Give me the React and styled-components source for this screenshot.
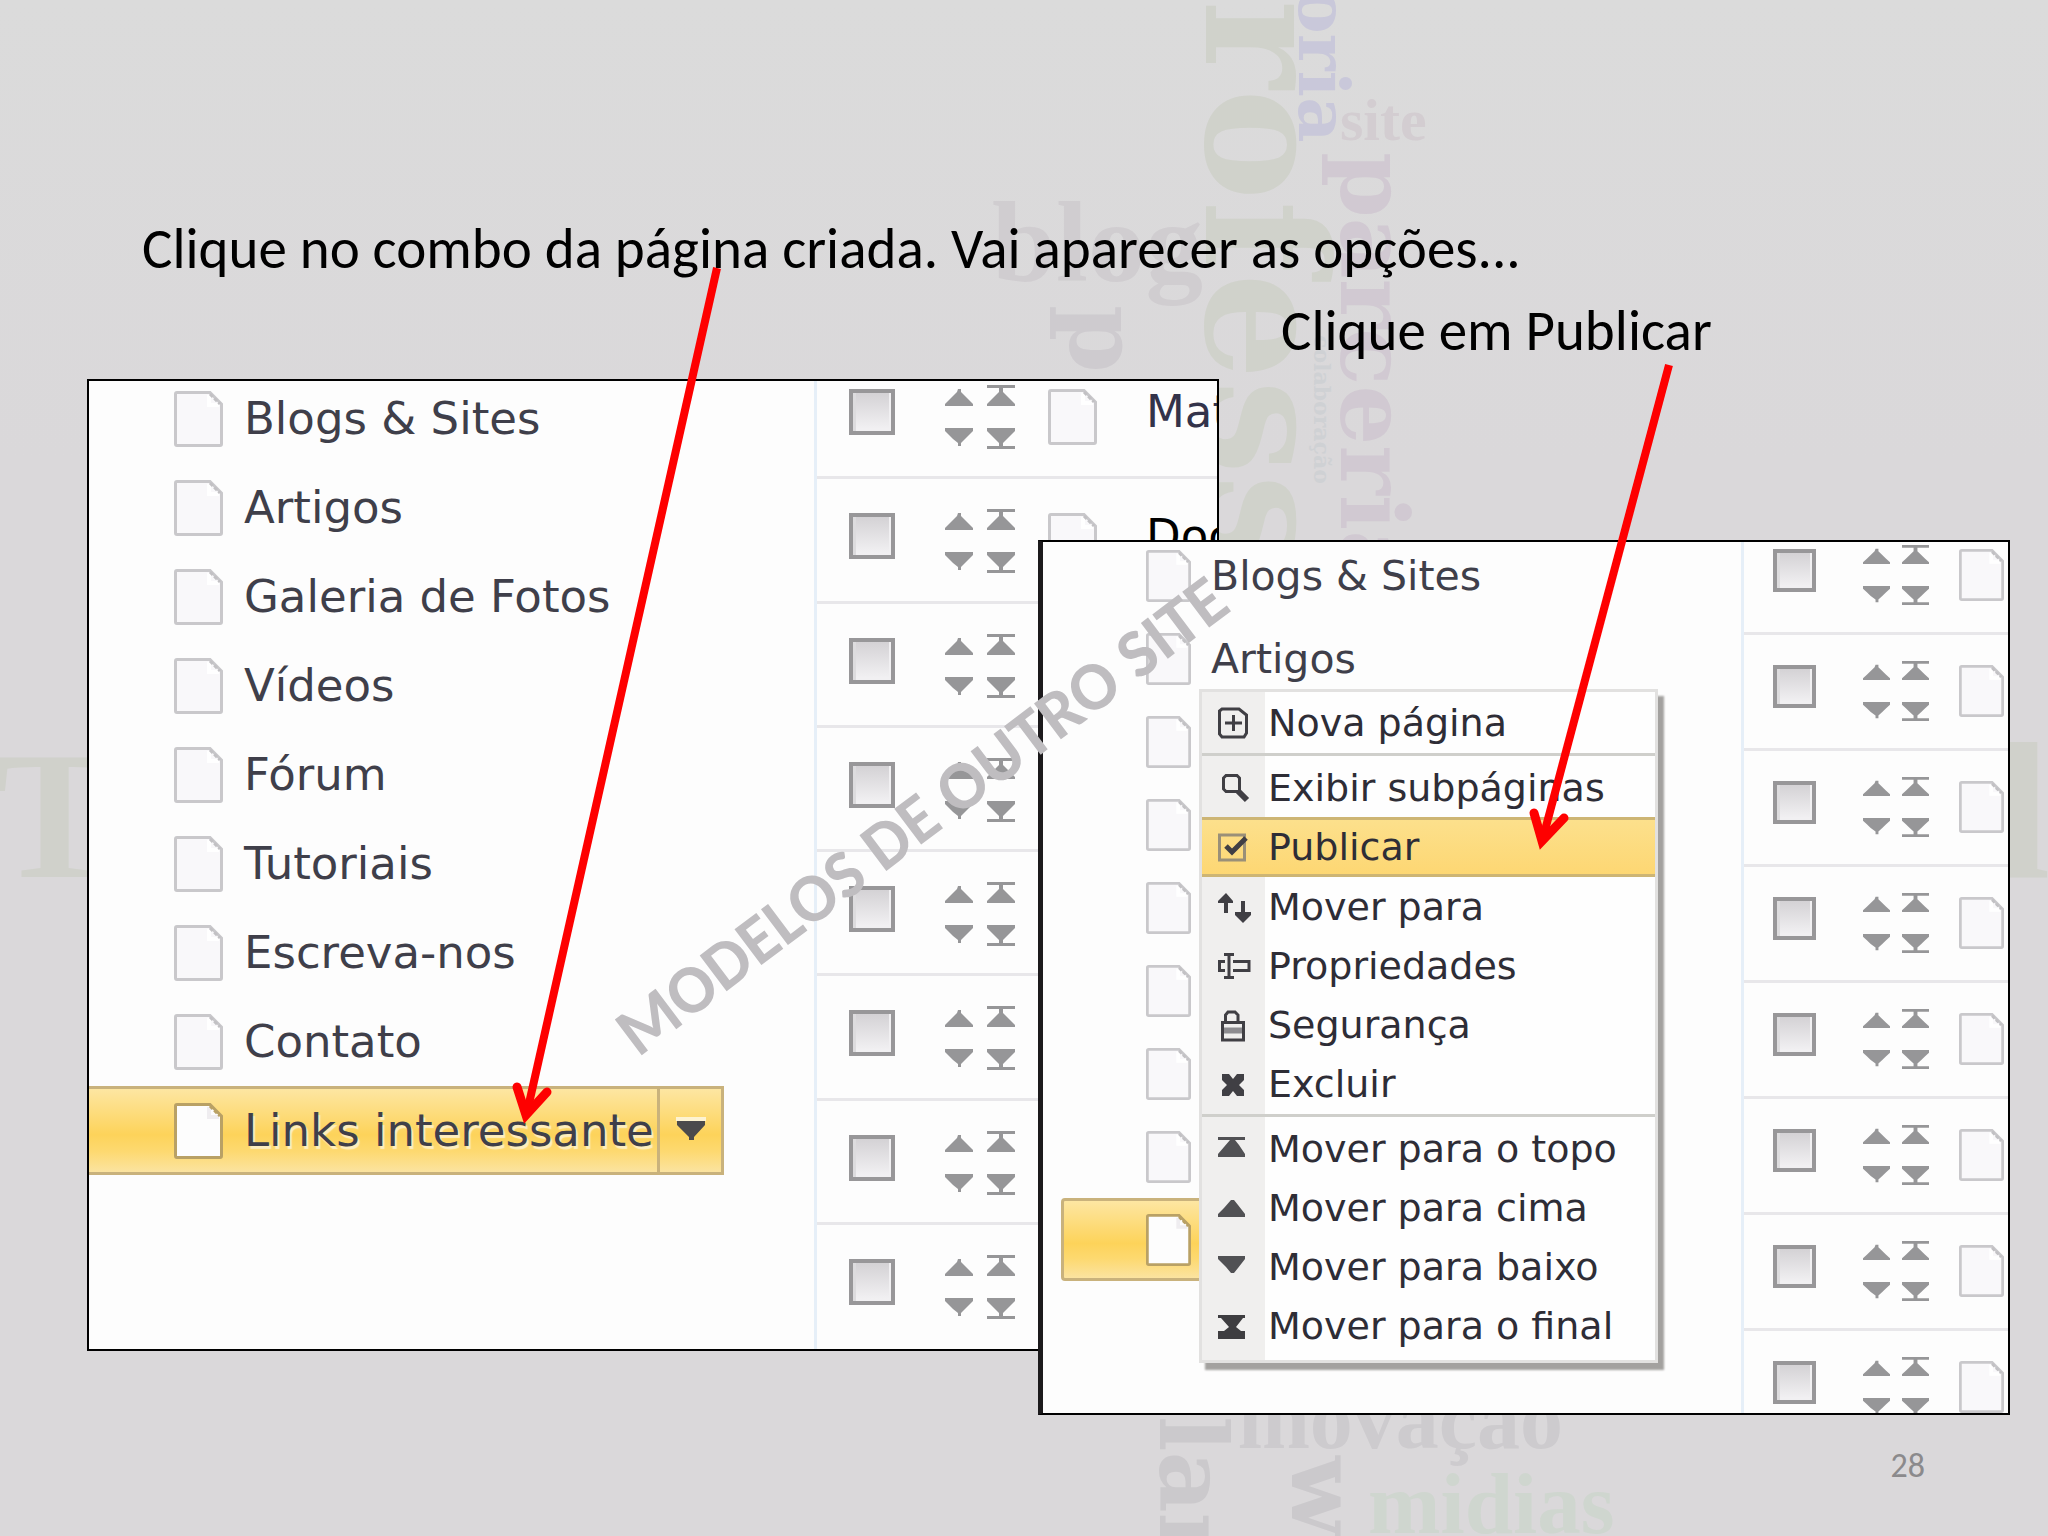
import React from 'react'
import styled, { createGlobalStyle, css, ThemeProvider } from 'styled-components'

const GlobalStyle = createGlobalStyle`
  *, *::before, *::after {
    box-sizing: border-box;
  }
  body {
    margin: 0;
    background: #dad9da;
  }
`

const large = {
  font: 45,
  pageWidth: 49,
  pageHeight: 56,
  treeRow: 89,
  treeWidth: 635,
  treeTop: -7,
  treeGap: 21,
  treeInset: 0,
  treeIndent: 85,
  listWidth: 403,
  listTop: -26,
  listRow: '1fr',
  rowTop: 30,
  rowLeft: 32,
  check: 46,
  checkGap: 50,
  arrowWidth: 28,
  arrowHeight: 22,
  arrowGap: 14,
  arrowSplit: 20,
  pageGap: 33,
  labelGap: 49,
}

const small = {
  font: 41,
  pageWidth: 45,
  pageHeight: 52,
  treeRow: 83,
  treeWidth: 480,
  treeTop: -8,
  treeGap: 20,
  treeInset: 18,
  treeIndent: 85,
  listWidth: 267,
  listTop: -23,
  listRow: '116px',
  rowTop: 26,
  rowLeft: 29,
  check: 43,
  checkGap: 47,
  arrowWidth: 27,
  arrowHeight: 20,
  arrowGap: 12,
  arrowSplit: 20,
  pageGap: 30,
  labelGap: 49,
}

const Slide = styled.main`
  position: relative;
  min-height: 100vh;
  overflow: hidden;
  background: linear-gradient(#dbdbdb, #dad8da 30%);
  font-family: Carlito, Lato, sans-serif;
  color: #000;
`

const WordCloud = styled.svg`
  position: absolute;
  inset: 0;
  width: 100%;
  height: 100%;
  font-family: 'Liberation Serif', serif;
  font-weight: 700;
`

const Annotations = styled(WordCloud)`
  pointer-events: none;
  font-family: Carlito, Lato, sans-serif;
`

const Header = styled.header`
  position: relative;
  padding-top: 208px;
`

const Title = styled.h1`
  margin: 0;
  padding-left: ${(props) => props.$indent}px;
  font-size: 57px;
  font-weight: 400;
  line-height: 82px;
  white-space: nowrap;
`

const Stage = styled.section`
  position: relative;
  display: grid;
  grid-template-columns: minmax(0, 951fr) minmax(0, 181fr) minmax(0, 791fr);
  grid-template-rows: 161px 811px 64px;
  margin: 7px 38px 0 87px;
`

const Panel = styled.div`
  position: relative;
  display: grid;
  grid-template-columns: minmax(0, 1fr) ${(props) => props.theme.listWidth}px;
  grid-template-rows: minmax(0, 1fr);
  overflow: hidden;
  border: 2px solid #000;
  background: #fdfdfd;
  font-family: Verdana, 'DejaVu Sans', sans-serif;
  font-size: ${(props) => props.theme.font}px;
`

const BackPanel = styled(Panel)`
  grid-area: 1 / 1 / 3 / 3;
`

const FrontPanel = styled(Panel)`
  grid-area: 2 / 2 / 4 / 4;
  border-left: 5px solid #1c1a1c;
`

const Tree = styled.ul`
  margin: ${(props) => props.theme.treeTop}px 0 0 ${(props) => props.theme.treeInset}px;
  padding: 0;
  list-style: none;
`

const TreeRow = styled.li`
  display: flex;
  width: ${(props) => props.theme.treeWidth}px;
  height: ${(props) => props.theme.treeRow}px;
`

const gold = css`
  border: 3px solid #c9b27c;
  background: linear-gradient(#fde6a2, #fdd35a 55%, #fdd970 75%, #fbe3a0);
`

const TreeLink = styled.a`
  flex: 1;
  display: flex;
  align-items: center;
  gap: ${(props) => props.theme.treeGap}px;
  min-width: 0;
  overflow: hidden;
  padding-left: ${(props) => props.theme.treeIndent}px;
  color: #3f3f4a;
  text-decoration: none;
  white-space: nowrap;
  ${(props) =>
    props.$active &&
    css`
      ${gold}
      padding-left: ${props.theme.treeIndent - 3}px;
      border-radius: 4px 0 0 4px;
      text-shadow: 2px 3px 1px #fdeec0;
    `}
  ${(props) =>
    props.$flush &&
    css`
      padding-left: ${props.theme.treeIndent}px;
      border-left: none;
      border-right: none;
      border-radius: 0;
    `}
`

const ComboButton = styled.button`
  ${gold}
  display: flex;
  align-items: center;
  justify-content: center;
  width: 67px;
  padding: 0;
`

const PageSvg = styled.svg`
  flex: none;
  width: ${(props) => props.theme.pageWidth}px;
  height: ${(props) => props.theme.pageHeight}px;
`

const List = styled.div`
  display: grid;
  grid-auto-rows: ${(props) => props.theme.listRow};
  height: calc(100% - ${(props) => props.theme.listTop}px);
  margin-top: ${(props) => props.theme.listTop}px;
  border-left: 3px solid #e6eff8;
`

const ListRow = styled.div`
  display: flex;
  align-items: flex-start;
  padding: ${(props) => props.theme.rowTop}px 0 0 ${(props) => props.theme.rowLeft}px;
  border-bottom: 3px solid #e8e7ea;
  overflow: hidden;
  white-space: nowrap;

  &:last-child {
    border-bottom: none;
  }

  ${PageSvg} {
    margin: 4px 0 0 ${(props) => props.theme.pageGap}px;
  }
`

const Check = styled.input`
  flex: none;
  appearance: none;
  width: ${(props) => props.theme.check}px;
  height: ${(props) => props.theme.check}px;
  margin: 4px ${(props) => props.theme.checkGap}px 0 0;
  border: 4px solid #989799;
  background: linear-gradient(#d4d2d5, #f3f2f4);
  box-shadow: inset 3px 0 0 #dddcde, inset -2px -2px 0 #f1f0f2;
`

const Arrows = styled.div`
  flex: none;
  display: grid;
  grid-template-columns: repeat(2, ${(props) => props.theme.arrowWidth}px);
  gap: ${(props) => props.theme.arrowSplit}px ${(props) => props.theme.arrowGap}px;
`

const ArrowButton = styled.button`
  display: block;
  height: ${(props) => props.theme.arrowHeight}px;
  padding: 0;
  border: none;
  background: none;
  color: #969698;

  svg {
    display: block;
    width: 100%;
    height: 100%;
  }
`

const ListLabel = styled.span`
  margin: 4px 0 0 ${(props) => props.theme.labelGap}px;
  line-height: ${(props) => props.theme.check}px;
  color: ${(props) => props.$color};
`

const Menu = styled.div`
  position: absolute;
  top: 147px;
  left: 156px;
  width: 459px;
  padding: 1px 0 5px;
  border: 3px solid #e2e1e0;
  background: linear-gradient(90deg, #f0efee 63px, #fefefe 63px);
  box-shadow: 6px 7px 2px #a3a19f;
`

const MenuItem = styled.button`
  display: flex;
  align-items: center;
  gap: 18px;
  width: 100%;
  height: 59px;
  padding: 0 0 0 16px;
  border: none;
  background: none;
  color: #2e2d36;
  font-family: inherit;
  font-size: 38px;
  white-space: nowrap;
  ${(props) =>
    props.$active &&
    css`
      height: 60px;
      border: solid #cdb574;
      border-width: 3px 0;
      background: linear-gradient(#fce08c, #fdd773);
    `}

  svg {
    flex: none;
    width: 32px;
    height: 32px;
  }
`

const Separator = styled.hr`
  height: 3px;
  margin: 1px 0 2px;
  border: none;
  background: #cfcfcb;
`

const Footer = styled.footer`
  position: relative;
  margin-top: 31px;
  padding-right: 123px;
  color: #8b8a8c;
  font-size: 34px;
  line-height: 40px;
  text-align: right;
`

const PageIcon = ({ active }) => (
  <PageSvg viewBox="0 0 49 56" preserveAspectRatio="none" aria-hidden="true">
    <path
      d="M3 1.5H36L47.500 13V53Q47.500 54.500 46 54.500H3Q1.500 54.500 1.500 53V3Q1.500 1.500 3 1.500Z"
      fill={active ? '#fdfdfd' : '#f9f8fa'}
      stroke={active ? '#b9a165' : '#c9c8cb'}
      strokeWidth="3"
    />
    <path d="M35 4V14H45" fill="none" stroke={active ? '#efedf0' : '#fff'} strokeWidth="4" />
    <path d="M36 3L46 13" stroke={active ? '#b9a165' : '#c2c1c4'} strokeWidth="3" strokeDasharray="4 2" />
  </PageSvg>
)

const arrowPaths = {
  top: 'M0 0H28V3H0ZM12 3H16V7L20 11L24 15L28 19V21H0V19L4 15L8 11L12 7Z',
  up: 'M13 4H16V7L20 11L24 15L28 19V21H0V19L4 15L8 11L12 7Z',
  down: 'M0 1H28V4L24 8L20 12L16 16V19H13V16L8 12L4 8L0 4Z',
  bottom: 'M0 1H28V4L24 8L20 12L16 16V19H28V22H0V19H12V16L8 12L4 8L0 4Z',
}

const Arrow = ({ type }) => (
  <svg viewBox="0 0 28 22" preserveAspectRatio="none" aria-hidden="true">
    <path d={arrowPaths[type]} fill="currentColor" />
  </svg>
)

const icons = {
  add: (
    <g fill="none" stroke="#403f44" strokeWidth="3">
      <path d="M4 2H21L28.500 8V26L26 30H4L1.500 27V4Z" />
      <path d="M7 16H24M15.500 8V24" />
    </g>
  ),
  search: (
    <g fill="none" stroke="#403f44" strokeWidth="3">
      <path d="M8 3.500H19L21.500 6V19.500H8L5.500 17V6Z" />
      <path d="M20 19L29 28" strokeWidth="6" />
    </g>
  ),
  publish: (
    <g fill="none">
      <rect x="1.500" y="4" width="25" height="25" stroke="#9a9078" strokeWidth="3" />
      <path d="M8 15L14 21L28 7" stroke="#403f44" strokeWidth="5" />
    </g>
  ),
  move: (
    <g fill="#403f44">
      <path d="M8 2L15 10V12H10V22H6V12H0V10Z" />
      <path d="M25 32L17 24V21H23V10H27V21H33V24Z" />
    </g>
  ),
  rename: (
    <g fill="none" stroke="#403f44" strokeWidth="3">
      <path d="M6 4.500H16M11 4V28M6 27.500H16" />
      <path d="M7 11.500H1.500V20.500H7M15 11.500H31V20.500H15" />
    </g>
  ),
  lock: (
    <g fill="none" stroke="#403f44" strokeWidth="3">
      <path d="M7.500 14V6L10 3H17L20 6V14" />
      <path d="M4.500 13.500H25.500V31H4.500Z" />
      <path d="M6 21.500H24" stroke="#8d8c90" strokeWidth="6" />
    </g>
  ),
  remove: (
    <path
      d="M4 6H11L15 11L19 6H26V12L21 17L26 22V28H19L15 23L11 28H4V22L9 17L4 12Z"
      fill="#403f44"
    />
  ),
  top: <path d="M0 4H27V7H17L21 12L27 21V24H0V21L6 14L12 7H0Z" fill="#515154" />,
  up: <path d="M13 8H16L20 13L27 22V25H0V22L6 16Z" fill="#515154" />,
  down: <path d="M0 5H27V8L20 17L16 22H13L8 16L0 8Z" fill="#515154" />,
  bottom: <path d="M0 5H27V8H25L18 17L23 21H27V29H0V21H6L11 17L3 8H0Z" fill="#3e3d40" />,
}

const pages = [
  'Blogs & Sites',
  'Artigos',
  'Galeria de Fotos',
  'Vídeos',
  'Fórum',
  'Tutoriais',
  'Escreva-nos',
  'Contato',
]

const menu = [
  { icon: 'add', label: 'Nova página', separated: true },
  { icon: 'search', label: 'Exibir subpáginas' },
  { icon: 'publish', label: 'Publicar', active: true },
  { icon: 'move', label: 'Mover para' },
  { icon: 'rename', label: 'Propriedades' },
  { icon: 'lock', label: 'Segurança' },
  { icon: 'remove', label: 'Excluir', separated: true },
  { icon: 'top', label: 'Mover para o topo' },
  { icon: 'up', label: 'Mover para cima' },
  { icon: 'down', label: 'Mover para baixo' },
  { icon: 'bottom', label: 'Mover para o final' },
]

const arrowLabels = {
  up: 'Mover para cima',
  top: 'Mover para o topo',
  down: 'Mover para baixo',
  bottom: 'Mover para o final',
}

// Words set horizontally, x / y is the start of the baseline
const flatWords = [
  { text: 'site', x: 1340, y: 140, size: 60, fill: '#d3cdd1' },
  { text: 'blog', x: 992, y: 281, size: 115, fill: '#d0cdd0' },
  { text: 'T', x: -6, y: 877, size: 182, fill: '#d0d1cb' },
  { text: 'l', x: 1996, y: 877, size: 196, fill: '#d0d1cb' },
  { text: 'inovação', x: 1238, y: 1448, size: 86, fill: '#cdcbce' },
  { text: 'midias', x: 1368, y: 1533, size: 87, fill: '#cfd6cf' },
]

// Words turned to read downwards
const turnedWords = [
  { text: 'rofess', x: 1206, y: 0, size: 168, fill: '#d0d2cb' },
  { text: 'oria', x: 1299, y: -13, size: 70, fill: '#c9c8da' },
  { text: 'p', x: 1070, y: 305, size: 97, fill: '#cecbcf' },
  { text: 'parceria', x: 1341, y: 152, size: 94, fill: '#d1c9d2' },
  { text: 'colaboração', x: 1314, y: 335, size: 22, fill: '#cfd1d4' },
  { text: 'lan', x: 1160, y: 1416, size: 94, fill: '#cbc9cc' },
  { text: 'w', x: 1292, y: 1456, size: 94, fill: '#cbc9cc' },
]

const PageTree = ({ children }) => (
  <Tree>
    {pages.map((page) => (
      <TreeRow key={page}>
        <TreeLink href="#">
          <PageIcon />
          {page}
        </TreeLink>
      </TreeRow>
    ))}
    {children}
  </Tree>
)

const ListItem = ({ index, label, color }) => (
  <ListRow>
    <Check type="checkbox" aria-label={`Selecionar ${label || index + 1}`} />
    <Arrows>
      {Object.keys(arrowLabels).map((type) => (
        <ArrowButton key={type} type="button" aria-label={arrowLabels[type]}>
          <Arrow type={type} />
        </ArrowButton>
      ))}
    </Arrows>
    <PageIcon />
    {label && <ListLabel $color={color}>{label}</ListLabel>}
  </ListRow>
)

const PageList = ({ labels = [] }) => (
  <List>
    {Array.from({ length: 8 }, (_, index) => (
      <ListItem key={index} index={index} {...labels[index]} />
    ))}
  </List>
)

const ContextMenu = () => (
  <Menu>
    {menu.map(({ icon, label, active, separated }) => (
      <React.Fragment key={label}>
        <MenuItem type="button" $active={active}>
          <svg viewBox="0 0 32 32" overflow="visible" aria-hidden="true">
            {icons[icon]}
          </svg>
          {label}
        </MenuItem>
        {separated && <Separator />}
      </React.Fragment>
    ))}
  </Menu>
)

const App = () => (
  <>
    <GlobalStyle />
    <Slide>
      <WordCloud viewBox="0 0 2048 1536" preserveAspectRatio="xMidYMin slice" aria-hidden="true">
        {flatWords.map(({ text, x, y, size, fill }) => (
          <text key={text} x={x} y={y} fontSize={size} fill={fill}>
            {text}
          </text>
        ))}
        {turnedWords.map(({ text, x, y, size, fill }) => (
          <text
            key={text}
            transform={`translate(${x} ${y}) rotate(90)`}
            fontFamily="DejaVu Serif"
            fontSize={size}
            fill={fill}
          >
            {text}
          </text>
        ))}
      </WordCloud>
      <Header>
        <Title $indent={142}>Clique no combo da página criada. Vai aparecer as opções...</Title>
        <Title as="p" $indent={1281}>
          Clique em Publicar
        </Title>
      </Header>
      <Stage>
        <ThemeProvider theme={large}>
          <BackPanel>
            <PageTree>
              <TreeRow>
                <TreeLink href="#" $active $flush>
                  <PageIcon active />
                  Links interessante
                </TreeLink>
                <ComboButton type="button" aria-label="Opções">
                  <svg width="30" height="28" viewBox="0 0 30 28" aria-hidden="true">
                    <path d="M0 0H30V4H0Z" fill="#fdf3d2" />
                    <path d="M1 4H29V8L18 20V23H13V20L1 8Z" fill="#4b4a4c" />
                  </svg>
                </ComboButton>
              </TreeRow>
            </PageTree>
            <PageList
              labels={[
                { label: 'Materiais', color: '#33334a' },
                { label: 'Documentos', color: '#000' },
              ]}
            />
          </BackPanel>
        </ThemeProvider>
        <ThemeProvider theme={small}>
          <FrontPanel>
            <PageTree>
              <TreeRow>
                <TreeLink href="#" $active aria-label="Links interessantes">
                  <PageIcon active />
                </TreeLink>
              </TreeRow>
            </PageTree>
            <PageList />
            <ContextMenu />
          </FrontPanel>
        </ThemeProvider>
      </Stage>
      <Footer>28</Footer>
      <Annotations viewBox="0 0 2048 1536" preserveAspectRatio="xMidYMin slice">
        <text transform="translate(638 1058) rotate(-37)" fontSize="69" fill="#bfbdc0">
          MODELOS DE OUTRO SITE
        </text>
        <g fill="none" stroke="#fe0000" strokeWidth="8">
          <path d="M717 268L528 1108" />
          <path d="M517 1087L526 1115L547 1092" strokeLinecap="round" strokeWidth="9" strokeMiterlimit="10" />
          <path d="M1669 365L1544 834" />
          <path d="M1534 813L1542 841L1564 818" strokeLinecap="round" strokeWidth="9" strokeMiterlimit="10" />
        </g>
      </Annotations>
    </Slide>
  </>
)

export default App
